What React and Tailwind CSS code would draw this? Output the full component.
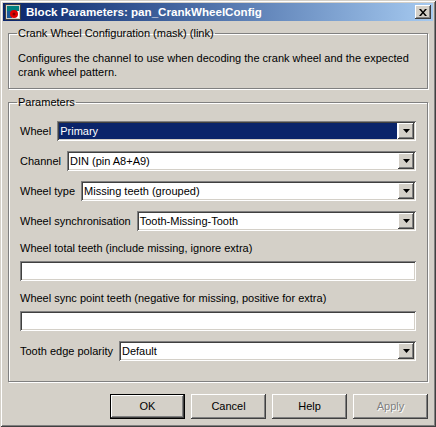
import React from 'react';

const sunken =
  'shadow-[inset_1px_1px_0_#808080,inset_-1px_-1px_0_#ffffff,inset_2px_2px_0_#404040,inset_-2px_-2px_0_#d4d0c8]';
const raised =
  'shadow-[inset_-1px_-1px_0_#404040,inset_1px_1px_0_#ffffff,inset_-2px_-2px_0_#808080]';

function Arrow() {
  return (
    <div className={`w-[16px] h-full bg-[#d4d0c8] flex items-center justify-center ${raised}`}>
      <svg width="7" height="4" viewBox="0 0 7 4">
        <path d="M0 0h7L3.5 4z" fill="#000" />
      </svg>
    </div>
  );
}

function Combo({ value, selected }) {
  return (
    <div className={`flex-1 h-[20px] bg-white p-[2px] flex ${sunken}`}>
      <div
        className={`flex-1 flex items-center pl-[1px] mr-[1px] ${
          selected ? 'bg-[#0a246a] text-white' : ''
        }`}
      >
        {value}
      </div>
      <Arrow />
    </div>
  );
}

function ComboRow({ label, value, selected }) {
  return (
    <div className="flex items-center gap-[6px]">
      <span>{label}</span>
      <Combo value={value} selected={selected} />
    </div>
  );
}

function TextField({ label }) {
  return (
    <div className="flex flex-col">
      <span className="leading-[14px] mb-[6px]">{label}</span>
      <div className={`h-[20px] bg-white ${sunken}`} />
    </div>
  );
}

function Button({ children, isDefault, disabled }) {
  return (
    <div
      className={`w-[75px] h-[25px] flex ${isDefault ? 'border border-black' : ''}`}
    >
      <div
        className={`flex-1 flex items-center justify-center bg-[#d4d0c8] ${raised} ${
          disabled ? 'text-[#808080] [text-shadow:1px_1px_0_#ffffff]' : ''
        }`}
      >
        {children}
      </div>
    </div>
  );
}

function AppIcon() {
  return (
    <svg width="16" height="16" viewBox="0 0 16 16">
      <rect x="0.5" y="0.5" width="15" height="15" fill="#d4d0c8" stroke="#404040" />
      <rect x="2" y="2" width="12" height="5" fill="#008080" />
      <rect x="2" y="7" width="5" height="7" fill="#1c5a9a" />
      <rect x="7" y="7" width="7" height="7" fill="#ffffff" />
      <circle cx="9" cy="10" r="4" fill="#e00000" />
      <circle cx="9" cy="10" r="1.5" fill="#800000" />
    </svg>
  );
}

export default function App() {
  return (
    <div className="w-[436px] h-[427px] bg-[#d4d0c8] p-[3px] flex flex-col text-[11px] text-black font-['Liberation_Sans',Arial,sans-serif] shadow-[inset_1px_1px_0_#d4d0c8,inset_-1px_-1px_0_#404040,inset_2px_2px_0_#ffffff,inset_-2px_-2px_0_#808080]">
      <div className="h-[18px] flex items-center pl-[2px] pr-[2px] bg-gradient-to-r from-[#0a246a] to-[#a6caf0]">
        <AppIcon />
        <span className="ml-[5px] flex-1 text-white font-bold text-[11.6px]">
          Block Parameters: pan_CrankWheelConfig
        </span>
        <div className={`w-[16px] h-[14px] bg-[#d4d0c8] flex items-center justify-center ${raised}`}>
          <svg width="8" height="7" viewBox="0 0 8 7">
            <path d="M0 0h2l2 2.5L6 0h2L5 3.5 8 7H6L4 4.5 2 7H0l3-3.5z" fill="#000" />
          </svg>
        </div>
      </div>

      <fieldset className="mx-[5px] mt-[6px] border border-[#808080] shadow-[inset_1px_1px_0_#ffffff,1px_1px_0_#ffffff] pl-[9px] pr-[9px] pt-[11px] pb-[9px]">
        <legend className="leading-[13px] px-[1px] -ml-[1px]">
          Crank Wheel Configuration (mask) (link)
        </legend>
        <p className="leading-[14px]">
          Configures the channel to use when decoding the crank wheel and the expected crank wheel
          pattern.
        </p>
      </fieldset>

      <fieldset className="mx-[5px] mt-[7px] border border-[#808080] shadow-[inset_1px_1px_0_#ffffff,1px_1px_0_#ffffff] pl-[11px] pr-[11px] pt-[12px] pb-[20px] flex flex-col gap-[10px]">
        <legend className="leading-[13px] px-[1px] -ml-[3px]">Parameters</legend>
        <ComboRow label="Wheel" value="Primary" selected />
        <ComboRow label="Channel" value="DIN (pin A8+A9)" />
        <ComboRow label="Wheel type" value="Missing teeth (grouped)" />
        <ComboRow label="Wheel synchronisation" value="Tooth-Missing-Tooth" />
        <TextField label="Wheel total teeth (include missing, ignore extra)" />
        <TextField label="Wheel sync point teeth (negative for missing, positive for extra)" />
        <ComboRow label="Tooth edge polarity" value="Default" />
      </fieldset>

      <div className="flex justify-end gap-[6px] mt-[12px] pr-[5px]">
        <Button isDefault>OK</Button>
        <Button>Cancel</Button>
        <Button>Help</Button>
        <Button disabled>Apply</Button>
      </div>
    </div>
  );
}
